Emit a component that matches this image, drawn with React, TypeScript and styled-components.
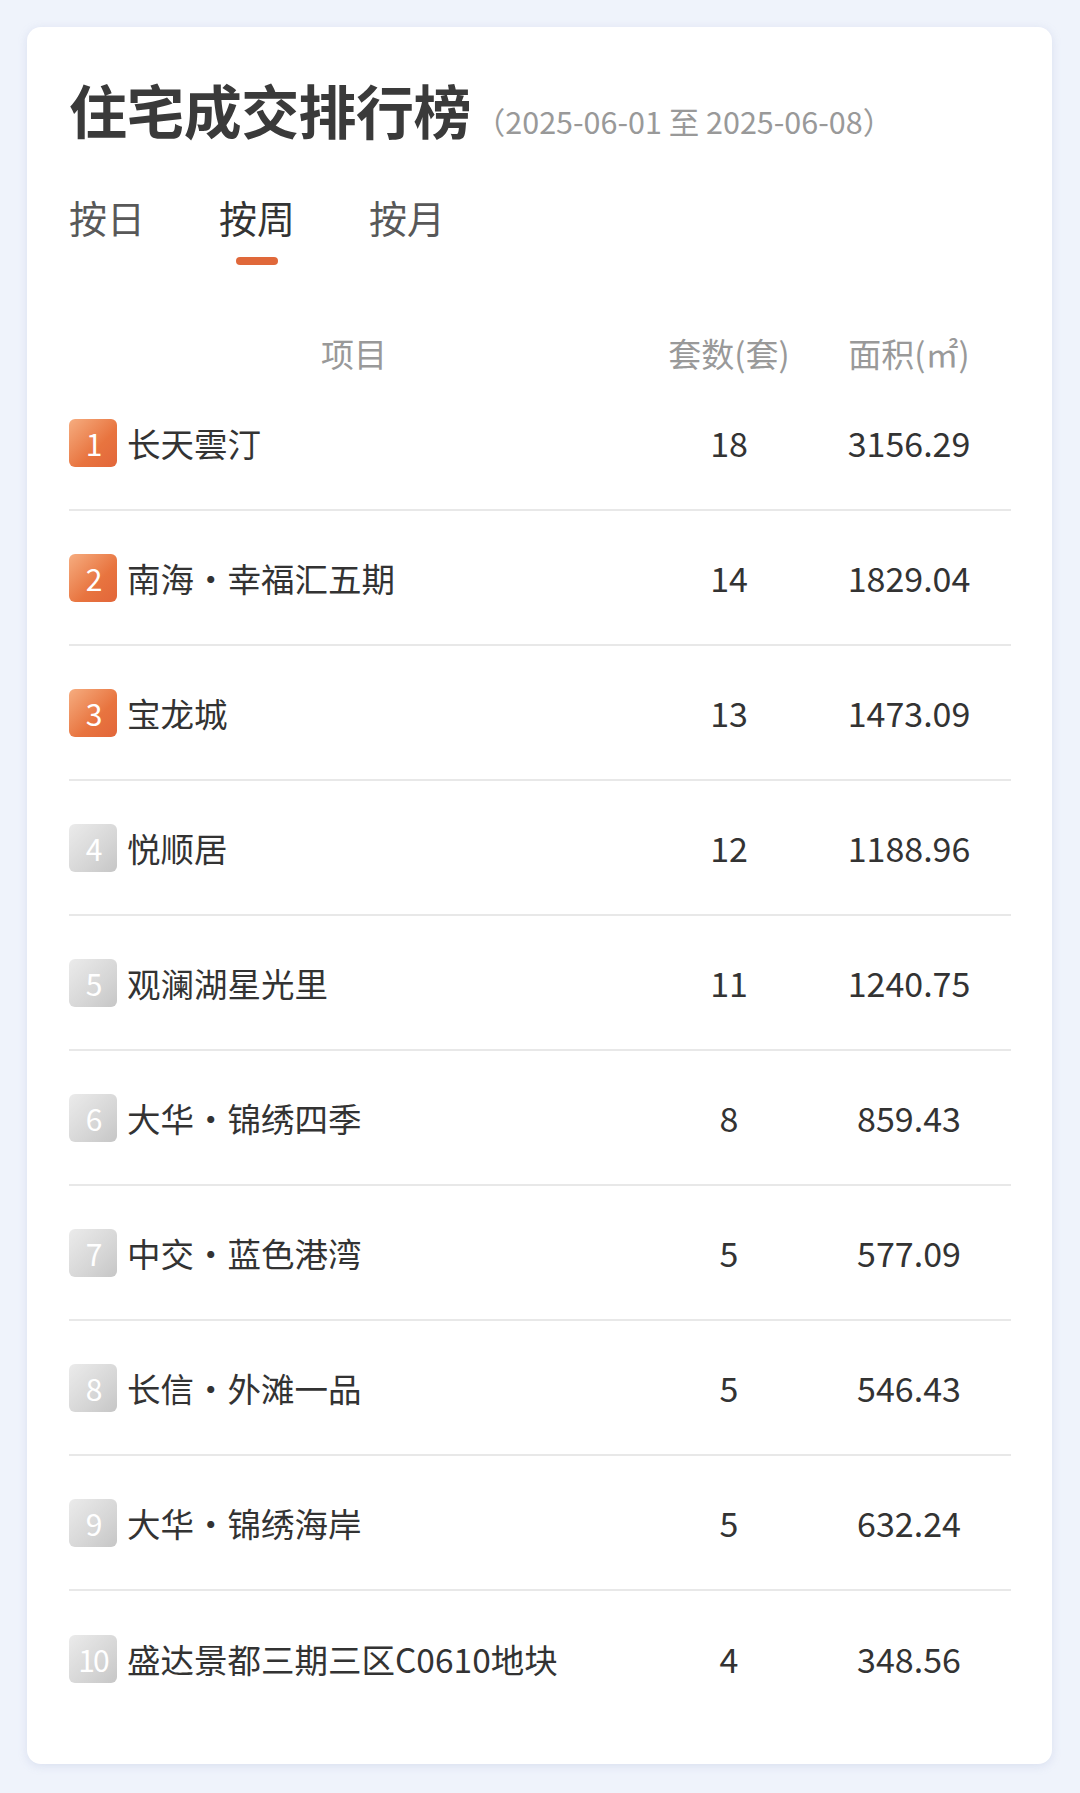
import React, { useState } from 'react';
import styled, { createGlobalStyle } from 'styled-components';

const GlobalStyle = createGlobalStyle`
  * {
    box-sizing: border-box;
  }
  body {
    margin: 0;
    background-color: #eff3fb;
    font-family: 'Noto Sans CJK SC', 'Noto Sans', sans-serif;
  }
`;

const Page = styled.div`
  padding: 27px 28px 28px 27px;
  min-height: 1793px;
`;

const Card = styled.div`
  background-color: #ffffff;
  border-radius: 14px;
  box-shadow: 0px 2px 10px rgba(140, 155, 200, 0.22);
  padding: 39px 41px 38px 42px;
`;

const TitleRow = styled.div`
  display: flex;
  align-items: baseline;
  height: 86px;
  line-height: 86px;
`;

const Title = styled.h1`
  margin: 0;
  font-size: 58px;
  font-weight: 700;
  color: #3a3a3a;
  letter-spacing: -0.6px;
`;

const DateRange = styled.span`
  margin-left: 4px;
  font-size: 30.5px;
  color: #999999;
`;

const Tabs = styled.div`
  display: flex;
  gap: 74px;
  margin-top: 42px;
`;

const Tab = styled.button<{ $active: boolean }>`
  border: none;
  background: none;
  padding: 0;
  cursor: pointer;
  font-family: inherit;
  font-size: 38px;
  line-height: 46px;
  color: ${(p) => (p.$active ? '#333333' : '#585858')};
  height: 71px;
  display: flex;
  flex-direction: column;
  align-items: center;

  &::after {
    content: '';
    display: ${(p) => (p.$active ? 'block' : 'none')};
    width: 42px;
    height: 8px;
    border-radius: 4px;
    background-color: #e0683a;
    margin-top: 17px;
  }
`;

const Table = styled.div`
  margin-top: 71px;
`;

const HeaderRow = styled.div`
  display: grid;
  grid-template-columns: 1fr 180px 180px;
  padding-right: 12px;
  height: 40px;
  line-height: 34px;
  font-size: 33px;
  color: #999999;
  text-align: center;
`;

const Row = styled.div`
  display: grid;
  grid-template-columns: 1fr 180px 180px;
  align-items: center;
  padding-right: 12px;
  height: 135px;
  border-bottom: 2px solid #e8e8e8;

  &:last-child {
    border-bottom: none;
  }
`;

const NameCell = styled.div`
  display: flex;
  align-items: center;
  gap: 10px;
  font-size: 33.5px;
  color: #333333;
`;

const Rank = styled.span<{ $top: boolean }>`
  width: 48px;
  height: 48px;
  flex-shrink: 0;
  border-radius: 6px;
  display: flex;
  align-items: center;
  justify-content: center;
  font-size: 30px;
  letter-spacing: -2px;
  color: #ffffff;
  background: ${(p) =>
    p.$top
      ? 'linear-gradient(135deg, #f6ad80 0%, #e8743f 60%, #e2663a 100%)'
      : 'linear-gradient(135deg, #ebebeb 0%, #d6d6d6 60%, #c6c6c6 100%)'};
`;

const NumCell = styled.div`
  text-align: center;
  font-size: 34px;
  color: #333333;
`;

type Item = {
  name: string;
  count: number;
  area: string;
};

const items: Item[] = [
  { name: '长天雲汀', count: 18, area: '3156.29' },
  { name: '南海・幸福汇五期', count: 14, area: '1829.04' },
  { name: '宝龙城', count: 13, area: '1473.09' },
  { name: '悦顺居', count: 12, area: '1188.96' },
  { name: '观澜湖星光里', count: 11, area: '1240.75' },
  { name: '大华・锦绣四季', count: 8, area: '859.43' },
  { name: '中交・蓝色港湾', count: 5, area: '577.09' },
  { name: '长信・外滩一品', count: 5, area: '546.43' },
  { name: '大华・锦绣海岸', count: 5, area: '632.24' },
  { name: '盛达景都三期三区C0610地块', count: 4, area: '348.56' },
];

const tabs = ['按日', '按周', '按月'];

const App: React.FC = () => {
  const [active, setActive] = useState(1);

  return (
    <Page>
      <GlobalStyle />
      <Card>
        <TitleRow>
          <Title>住宅成交排行榜</Title>
          <DateRange>（2025-06-01 至 2025-06-08）</DateRange>
        </TitleRow>
        <Tabs>
          {tabs.map((t, i) => (
            <Tab key={t} $active={i === active} onClick={() => setActive(i)}>
              {t}
            </Tab>
          ))}
        </Tabs>
        <Table>
          <HeaderRow>
            <span>项目</span>
            <span>套数(套)</span>
            <span>面积(㎡)</span>
          </HeaderRow>
          {items.map((item, i) => (
            <Row key={item.name}>
              <NameCell>
                <Rank $top={i < 3}>{i + 1}</Rank>
                {item.name}
              </NameCell>
              <NumCell>{item.count}</NumCell>
              <NumCell>{item.area}</NumCell>
            </Row>
          ))}
        </Table>
      </Card>
    </Page>
  );
};

export default App;
